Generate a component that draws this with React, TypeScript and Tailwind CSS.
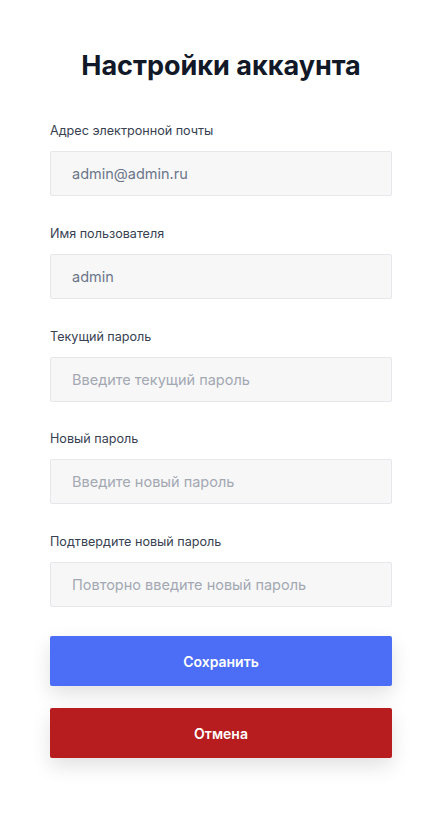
import React from 'react';

interface FieldProps {
  label: string;
  value?: string;
  placeholder?: string;
  type?: string;
}

const Field: React.FC<FieldProps> = ({ label, value, placeholder, type = "text" }) => {
  return (
    <div className="flex flex-col">
      <label className="text-[12.6px] leading-[22px] text-[#374151]">{label}</label>
      <input
        type={type}
        defaultValue={value}
        placeholder={placeholder}
        className="mt-[9px] h-[45px] w-full rounded-[2px] border border-[#e5e7eb] bg-[#f7f7f7] px-[21px] text-[14.5px] text-[#6b7589] placeholder:text-[#a3a8b3] outline-none"
      />
    </div>
  );
};

export default function App() {
  return (
    <div className="min-h-[828px] bg-white font-['Inter','Noto_Sans',sans-serif]">
      <div className="mx-auto w-[342px] pt-12">
        <h1 className="text-center text-[27px] font-bold leading-9 text-[#111827]">Настройки аккаунта</h1>
        <form className="mt-9 flex flex-col gap-[26.75px]">
          <Field label="Адрес электронной почты" value="admin@admin.ru" />
          <Field label="Имя пользователя" value="admin" />
          <Field label="Текущий пароль" placeholder="Введите текущий пароль" type="password" />
          <Field label="Новый пароль" placeholder="Введите новый пароль" type="password" />
          <Field label="Подтвердите новый пароль" placeholder="Повторно введите новый пароль" type="password" />
        </form>
        <div className="mt-[29px] flex flex-col gap-[22px]">
          <button className="h-[50px] w-full rounded-[2px] bg-[#4c6ef7] text-[14px] font-semibold text-white shadow-[0_8px_20px_rgba(0,0,0,0.12)]">
            Сохранить
          </button>
          <button className="h-[50px] w-full rounded-[2px] bg-[#b71c1e] text-[14px] font-semibold text-white shadow-[0_8px_20px_rgba(0,0,0,0.12)]">
            Отмена
          </button>
        </div>
      </div>
    </div>
  );
}
